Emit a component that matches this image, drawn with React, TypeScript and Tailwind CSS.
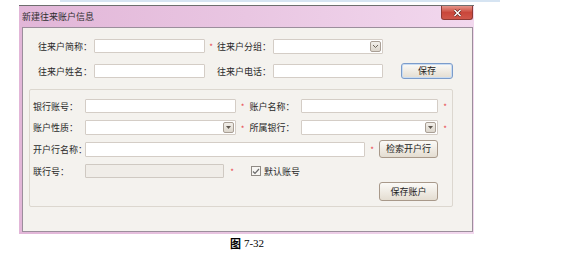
import React from 'react';

const font = { fontFamily: '"Noto Sans CJK SC", "Liberation Sans", sans-serif' };

const Star = ({ w = 'w-[12px]' }: { w?: string }) => (
  <span className={`${w} flex justify-center text-[#e8454a] text-[8px] leading-none pt-[2px]`}>*</span>
);

const Input = ({ w, disabled }: { w: string; disabled?: boolean }) => (
  <div
    className={`${w} h-[14px] border rounded-[1px] ${
      disabled ? 'bg-[#f0ede8] border-[#cfc9c2]' : 'bg-white border-[#d4cdc6]'
    }`}
  />
);

const Select = ({ w, chevron }: { w: string; chevron?: boolean }) => (
  <div className={`${w} h-[15px] bg-white border border-[#d4cdc6] rounded-[1px] flex justify-end items-center pr-[1px]`}>
    <div className="w-[11px] h-[11px] border border-[#a99f95] rounded-[2px] bg-gradient-to-b from-[#f2efea] to-[#dcd6cc] flex items-center justify-center">
      {chevron ? (
        <svg width="7" height="5" viewBox="0 0 7 5">
          <path d="M1 1 L3.5 3.5 L6 1" fill="none" stroke="#6d655c" strokeWidth="1" />
        </svg>
      ) : (
        <svg width="5" height="3" viewBox="0 0 5 3">
          <path d="M0 0 L5 0 L2.5 3 Z" fill="#5e564e" />
        </svg>
      )}
    </div>
  </div>
);

const Btn = ({ w, h, label, focus }: { w: string; h: string; label: string; focus?: boolean }) => (
  <div
    className={`${w} ${h} rounded-[3px] border ${
      focus ? 'border-[#7b9ccb] shadow-[inset_0_0_0_1px_#c9dcf2]' : 'border-[#a8998a]'
    } bg-gradient-to-b from-[#fbfaf7] to-[#e4ddd1] flex items-center justify-center text-[9px] text-[#222]`}
  >
    {label}
  </div>
);

const Label = ({ w, text }: { w: string; text: string }) => (
  <span className={`${w} text-[9px] text-[#2a2a2a] leading-none whitespace-nowrap`}>{text}</span>
);

export default function App() {
  return (
    <div className="w-[565px] h-[254px] bg-white relative overflow-hidden" style={font}>
      <div className="h-[2px] bg-[#d6e4f2] w-[440px] ml-[60px]" />
      <div className="pt-[3px] pl-[19px]">
        <div className="w-[455px] h-[229px] flex flex-col border-t border-[#6e6e6e] bg-gradient-to-r from-[#e2b6d8] via-[#e9c6e2] to-[#f2d8ee]">
          <div className="h-[21px] flex items-start justify-between relative">
            <span className="text-[9px] text-[#303030] pl-[3px] pt-[6px] leading-none">新建往来账户信息</span>
            <div className="w-[32px] h-[14px] mr-[1px] rounded-b-[3px] border border-[#8e3a34] border-t-0 bg-gradient-to-b from-[#e5948a] via-[#c9463b] to-[#d0564a] flex items-center justify-center">
              <svg width="9" height="8" viewBox="0 0 9 8">
                <path d="M1.5 1 L7.5 7 M7.5 1 L1.5 7" stroke="#5a1a16" strokeWidth="2.6" />
                <path d="M1.5 1 L7.5 7 M7.5 1 L1.5 7" stroke="#ffffff" strokeWidth="1.5" />
              </svg>
            </div>
          </div>
          <div className="flex-1 ml-[3px] mr-[1px] mb-[2px] bg-[#f4f2ee] border border-[#9c8e9c] flex flex-col">
            {/* top section */}
            <div className="flex items-center h-[14px] mt-[11px] pl-[15px]">
              <Label w="w-[56px]" text="往来户简称：" />
              <Input w="w-[111px]" />
              <Star />
              <Label w="w-[56px]" text="往来户分组：" />
              <Select w="w-[110px]" chevron />
            </div>
            <div className="flex items-center h-[16px] mt-[10px] pl-[15px]">
              <Label w="w-[56px]" text="往来户姓名：" />
              <Input w="w-[111px]" />
              <span className="w-[12px]" />
              <Label w="w-[56px]" text="往来户电话：" />
              <Input w="w-[110px]" />
              <span className="w-[18px]" />
              <Btn w="w-[52px]" h="h-[16px]" label="保存" focus />
            </div>
            {/* account group */}
            <div className="mt-[10px] ml-[6px] w-[424px] h-[118px] border border-[#dcd7cf] rounded-[2px] flex flex-col pl-[3px]">
              <div className="flex items-center h-[14px] mt-[9px]">
                <Label w="w-[52px]" text="银行账号：" />
                <Input w="w-[151px]" />
                <Star w="w-[14px]" />
                <Label w="w-[52px]" text="账户名称：" />
                <Input w="w-[137px]" />
                <Star w="w-[14px]" />
              </div>
              <div className="flex items-center h-[15px] mt-[7px]">
                <Label w="w-[52px]" text="账户性质：" />
                <Select w="w-[151px]" />
                <Star w="w-[14px]" />
                <Label w="w-[52px]" text="所属银行：" />
                <Select w="w-[137px]" />
                <Star w="w-[14px]" />
              </div>
              <div className="flex items-center h-[18px] mt-[5px]">
                <Label w="w-[52px]" text="开户行名称：" />
                <div className="w-[280px] h-[15px] bg-white border border-[#d4cdc6] rounded-[1px]" />
                <Star w="w-[14px]" />
                <Btn w="w-[59px]" h="h-[18px]" label="检索开户行" />
              </div>
              <div className="flex items-center h-[14px] mt-[6px]">
                <Label w="w-[52px]" text="联行号：" />
                <Input w="w-[139px]" disabled />
                <Star w="w-[16px]" />
                <span className="w-[11px]" />
                <div className="w-[10px] h-[10px] border border-[#8f8a84] bg-[#f7f6f3] flex items-center justify-center">
                  <svg width="8" height="7" viewBox="0 0 8 7">
                    <path d="M1 3.5 L3 5.5 L7 1" fill="none" stroke="#6a6a6a" strokeWidth="1.2" />
                  </svg>
                </div>
                <span className="ml-[3px] text-[9px] text-[#2a2a2a] leading-none">默认账号</span>
              </div>
              <div className="flex h-[19px] mt-[4px] pl-[346px]">
                <Btn w="w-[59px]" h="h-[19px]" label="保存账户" />
              </div>
            </div>
          </div>
        </div>
      </div>
      <div className="flex justify-center w-[494px] mt-[4px] items-center gap-[3px] text-[11px] text-black leading-none">
        <span className="font-bold">图</span>
        <span style={{ fontFamily: '"Liberation Serif", serif' }}>7-32</span>
      </div>
    </div>
  );
}
